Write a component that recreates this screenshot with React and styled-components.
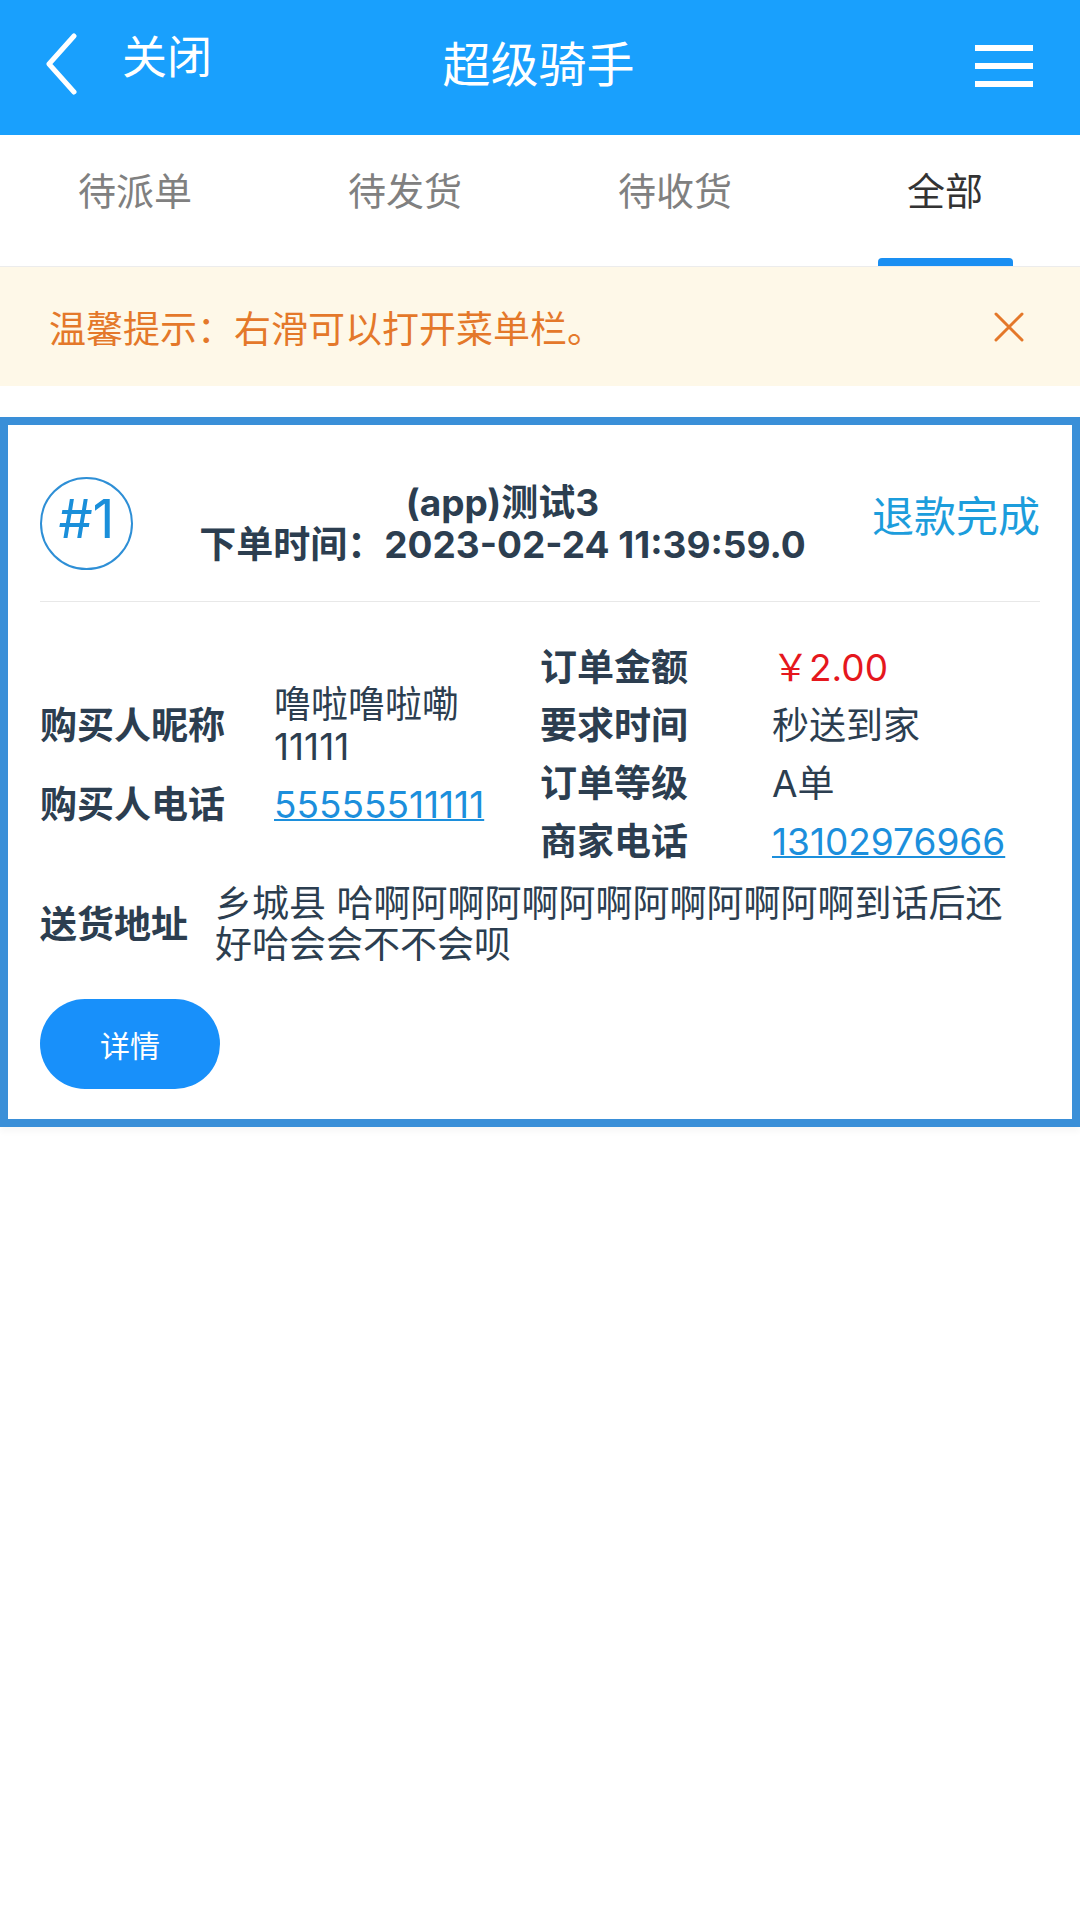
import React from "react";
import styled, { createGlobalStyle } from "styled-components";

const GlobalStyle = createGlobalStyle`
  * {
    box-sizing: border-box;
  }

  body {
    margin: 0;
    background: #fff;
    font-family: Inter, "Noto Sans CJK SC", sans-serif;
    color: #2c3e50;
  }
`;

const Page = styled.div`
  width: 1080px;
  min-height: 1920px;
  background: #fff;
`;

const NavBar = styled.header`
  height: 135px;
  background: #19a0fd;
  color: #fff;
  display: grid;
  grid-template-columns: 1fr auto 1fr;
  align-items: center;
  padding: 0 47px 0 44px;
`;

const BackButton = styled.div`
  justify-self: start;
  display: flex;
  align-items: center;
  gap: 44px;
  margin-top: -8px;
  font-family: "Noto Sans CJK SC", sans-serif;
  font-size: 45px;

  span {
    margin-bottom: 18px;
  }
`;

const NavTitle = styled.h1`
  margin: 0 0 14px;
  font-family: "Noto Sans CJK SC", sans-serif;
  font-size: 48px;
  font-weight: 400;
`;

const MenuButton = styled.div`
  justify-self: end;
  display: flex;
  flex-direction: column;
  gap: 12px;
  width: 58px;
  margin-bottom: 4px;

  i {
    display: block;
    height: 6px;
    background: #fff;
  }
`;

const Tabs = styled.nav`
  display: flex;
  height: 132px;
  border-bottom: 1px solid #ececec;
`;

const Tab = styled.div`
  position: relative;
  flex: 1;
  display: flex;
  align-items: center;
  justify-content: center;
  padding-bottom: 24px;
  font-family: "Noto Sans CJK SC", sans-serif;
  font-size: 38px;
  color: ${(p) => (p.$active ? "#333" : "#808080")};

  &::after {
    content: "";
    display: ${(p) => (p.$active ? "block" : "none")};
    position: absolute;
    bottom: 0;
    left: 50%;
    width: 135px;
    height: 8px;
    margin-left: -67px;
    border-radius: 4px 4px 0 0;
    background: #1a8ff2;
  }
`;

const Notice = styled.div`
  height: 119px;
  background: #fef8e8;
  display: flex;
  align-items: center;
  justify-content: space-between;
  padding: 0 56px 0 49px;
  font-family: "Noto Sans CJK SC", sans-serif;
  font-size: 37px;
  color: #e4782a;
`;

const Card = styled.section`
  margin-top: 31px;
  border: 8px solid #3a8fd8;
  padding: 52px 32px 30px;
  box-shadow: 0 5px 6px rgba(0, 0, 0, 0.03);
`;

const CardHead = styled.div`
  display: flex;
  align-items: center;
  padding-bottom: 31px;
  border-bottom: 1px solid #e8e8e8;
`;

const Badge = styled.div`
  width: 93px;
  height: 93px;
  border: 2px solid #2e8fd6;
  border-radius: 50%;
  display: flex;
  align-items: center;
  justify-content: center;
  padding-bottom: 10px;
  font-size: 54px;
  line-height: 1;
  color: #1a8fda;
`;

const OrderTitle = styled.div`
  flex: 1;
  text-align: center;
  font-size: 37px;
  font-weight: 700;
  line-height: 42px;
  color: #2c3e50;
`;

const Status = styled.div`
  margin-bottom: 20px;
  font-family: "Noto Sans CJK SC", sans-serif;
  font-size: 42px;
  color: #1c9ddc;
`;

const InfoGrid = styled.div`
  display: flex;
  align-items: center;
  padding-top: 37px;
`;

const InfoColumn = styled.div`
  flex: 0 0 50%;
  padding-right: ${(p) => p.$gap || 0}px;
`;

const Row = styled.div`
  display: flex;
  align-items: center;
  padding: 8px 0;
  font-size: 37px;
  line-height: 42px;
`;

const Label = styled.div`
  flex: none;
  width: ${(p) => p.$width || 234}px;
  font-weight: 700;
  color: #2c3e50;
`;

const Value = styled.div`
  flex: 1;
  min-width: 0;
  color: ${(p) => p.$color || "#2c3e50"};
`;

const Phone = styled.span`
  color: #1c8fdc;
  text-decoration: underline;
  text-decoration-thickness: 2px;
  text-underline-offset: 1px;
`;

const AddressRow = styled(Row)`
  padding: 12px 30px 8px 0;
  line-height: 41px;
`;

const DetailButton = styled.button`
  margin-top: 26px;
  width: 180px;
  height: 90px;
  border: none;
  border-radius: 45px;
  background: #1890fa;
  color: #fff;
  font-family: "Noto Sans CJK SC", sans-serif;
  font-size: 30px;
`;

const tabs = ["待派单", "待发货", "待收货", "全部"];

const App = () => {
  return (
    <Page>
      <GlobalStyle />
      <NavBar>
        <BackButton>
          <svg width="34" height="62" viewBox="0 0 34 62" fill="none">
            <polyline
              points="30,3 5,31 30,59"
              stroke="#fff"
              strokeWidth="5"
              strokeLinecap="round"
              strokeLinejoin="round"
            />
          </svg>
          <span>关闭</span>
        </BackButton>
        <NavTitle>超级骑手</NavTitle>
        <MenuButton>
          <i />
          <i />
          <i />
        </MenuButton>
      </NavBar>

      <Tabs>
        {tabs.map((t, i) => (
          <Tab key={t} $active={i === tabs.length - 1}>
            {t}
          </Tab>
        ))}
      </Tabs>

      <Notice>
        <span>温馨提示：右滑可以打开菜单栏。</span>
        <svg width="30" height="30" viewBox="0 0 30 30">
          <path d="M2 2 L28 28 M28 2 L2 28" stroke="#e4782a" strokeWidth="3" strokeLinecap="round" />
        </svg>
      </Notice>

      <Card>
        <CardHead>
          <Badge>#1</Badge>
          <OrderTitle>
            <div>(app)测试3</div>
            <div>下单时间：2023-02-24 11:39:59.0</div>
          </OrderTitle>
          <Status>退款完成</Status>
        </CardHead>

        <InfoGrid>
          <InfoColumn $gap={24}>
            <Row>
              <Label>购买人昵称</Label>
              <Value>噜啦噜啦嘞11111</Value>
            </Row>
            <Row>
              <Label>购买人电话</Label>
              <Value>
                <Phone>55555511111</Phone>
              </Value>
            </Row>
          </InfoColumn>
          <InfoColumn>
            <Row>
              <Label $width={232}>订单金额</Label>
              <Value $color="#e5171d">￥2.00</Value>
            </Row>
            <Row>
              <Label $width={232}>要求时间</Label>
              <Value>秒送到家</Value>
            </Row>
            <Row>
              <Label $width={232}>订单等级</Label>
              <Value>A单</Value>
            </Row>
            <Row>
              <Label $width={232}>商家电话</Label>
              <Value>
                <Phone>13102976966</Phone>
              </Value>
            </Row>
          </InfoColumn>
        </InfoGrid>

        <AddressRow>
          <Label $width={175}>送货地址</Label>
          <Value>乡城县 哈啊阿啊阿啊阿啊阿啊阿啊阿啊到话后还好哈会会不不会呗</Value>
        </AddressRow>

        <DetailButton>详情</DetailButton>
      </Card>
    </Page>
  );
};

export default App;
